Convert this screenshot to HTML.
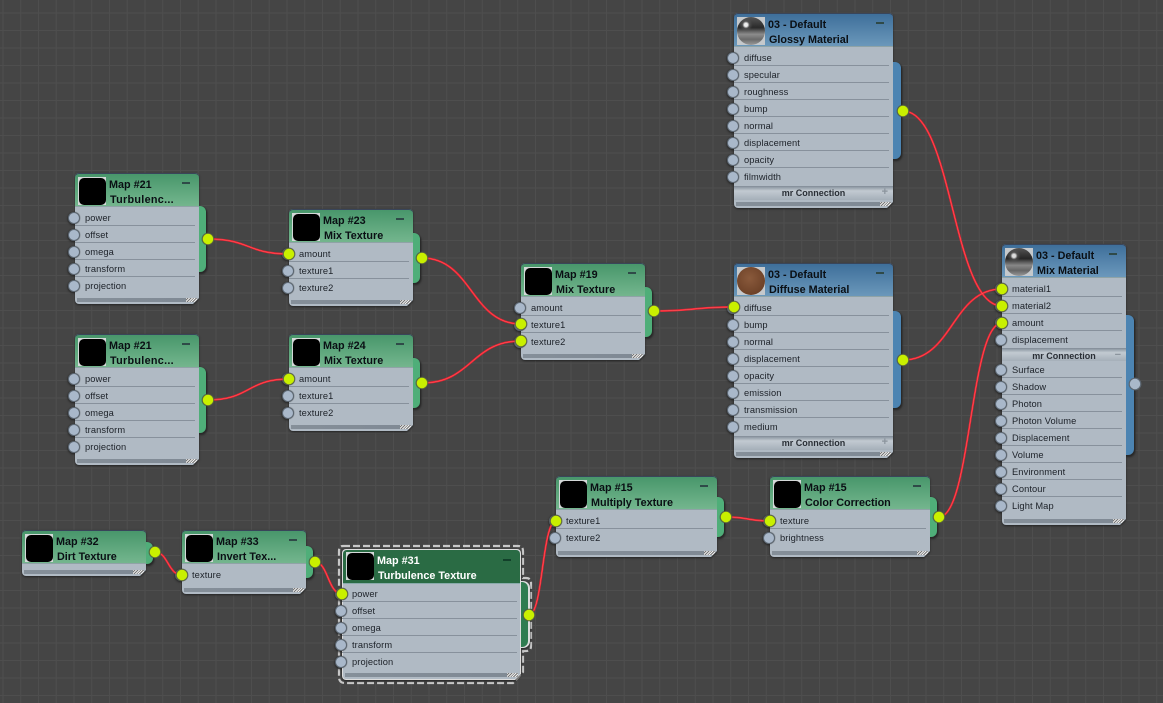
<!DOCTYPE html>
<html><head><meta charset="utf-8"><style>
html,body{margin:0;padding:0;width:1163px;height:703px;overflow:hidden;background:#454545}
#w{position:absolute;left:0;top:0;width:1163px;height:703px;overflow:hidden;font-family:"Liberation Sans",sans-serif;filter:blur(.3px);
background-color:#454545;background-image:linear-gradient(#4e4e4e 1px,transparent 1px),linear-gradient(90deg,#4e4e4e 1px,transparent 1px);background-size:17.75px 17.5px;background-position:2.5px 12.5px}
.n{position:absolute;filter:drop-shadow(0 1px 1px #222)}
.tab{position:absolute;width:7px;border-radius:0 6px 6px 0;box-shadow:1px 1px 1px #2a2a2a}
.g .tab{background:#4fae79}.bl .tab{background:#4c84b2;width:8px}
.b{position:absolute;left:0;top:-1px;right:0;bottom:0;background:#b0bac4;clip-path:polygon(0 0,100% 0,100% calc(100% - 6px),calc(100% - 6px) 100%,0 100%);border-radius:4px}
.h{position:relative;height:34px;box-sizing:border-box;border-radius:4px 4px 0 0;border-bottom:1px solid #8fa3a6;color:#0a0f14;font-size:10.8px;font-weight:bold;box-shadow:inset 0 1px 0 #39455a}
.g .h{background:linear-gradient(#47966a,#74b68e)}
.bl .h{background:linear-gradient(#3d6e9a,#6b98bb)}
.h span{position:absolute;left:34px;line-height:14px;top:5px;white-space:nowrap}
.h span+span{left:35px;top:20px}
.h u{position:absolute;right:9px;top:9px;width:8px;height:2px;background:#2f4a48}
.th{position:absolute;left:3px;top:3px;width:28px;height:28px;background:#d4d8d8}
.th:after{content:"";position:absolute;left:.5px;top:.5px;width:27px;height:27px;background:#000;border-radius:5px}
.thc{position:absolute;left:3px;top:3px;width:28px;height:28px;background:#c5c9cc;overflow:hidden}
.thc i{position:absolute;left:0;top:0;width:28px;height:28px;border-radius:50%}
.rows{position:absolute;left:0;right:0;top:35px}
p{position:relative;margin:0 4px 0 0;height:17px;line-height:18px;box-sizing:border-box;border-bottom:1px solid #87919c;padding-left:10px;font-size:9.3px;color:#1c2128;letter-spacing:.1px;white-space:nowrap}
p.l{border-bottom:0}
p:before{content:"";position:absolute;left:-7px;top:2.5px;width:10px;height:10px;border-radius:50%;background:#a9b8ca;border:1.5px solid #5d6873;box-shadow:0 0 1px #333}
.m{height:14px;margin:1px 0 0;background:linear-gradient(#8e99a4,#c2cad1 30%,#a5afb9);text-align:center;font-size:9px;font-weight:bold;line-height:13px;color:#2a2f36;position:relative;border-top:1px solid #87919c;box-sizing:border-box}
.m s{position:absolute;right:5px;top:-1px;color:#8b949d;text-decoration:none;font-size:11px}
.f{position:absolute;left:2px;right:2px;bottom:2px;height:4px;background:linear-gradient(90deg,#858f99,#7f8994);}
.f:after{content:"";position:absolute;right:0;top:0;width:11px;height:4px;background:repeating-linear-gradient(135deg,#eee 0 1px,#777 1px 2px)}
.sel .h{background:#2a6b44;color:#fff;border-bottom:1px solid #8aa;box-shadow:none}
.sel .h u{background:#12402a}
.sel .b{box-shadow:none;top:0}
svg{position:absolute;left:0;top:0}
</style></head><body><div id="w">

<svg width="1163" height="703" style="z-index:0">
<path d="M343 546H518Q523 546 523 551V578H526Q531 578 531 583V646Q531 651 526 651H523V672L513 683H345Q339 683 339 677V551Q339 546 343 546Z" fill="none" stroke="#c8c8c8" stroke-width="2.2" stroke-dasharray="7 3"/>
</svg>

<div class="n g" style="left:75px;top:174px;width:124px;height:130px"><div class="tab" style="left:124px;top:32px;height:66px"></div><div class="b"><div class="h"><span>Map #21</span><span style="letter-spacing:.3px">Turbulenc...</span><u></u></div><div class="f"></div></div><div class="th"></div><div class="rows"><p>power</p><p>offset</p><p>omega</p><p>transform</p><p class="l">projection</p></div></div>

<div class="n g" style="left:75px;top:335px;width:124px;height:130px"><div class="tab" style="left:124px;top:32px;height:66px"></div><div class="b"><div class="h"><span>Map #21</span><span style="letter-spacing:.3px">Turbulenc...</span><u></u></div><div class="f"></div></div><div class="th"></div><div class="rows"><p>power</p><p>offset</p><p>omega</p><p>transform</p><p class="l">projection</p></div></div>

<div class="n g" style="left:289px;top:210px;width:124px;height:96px"><div class="tab" style="left:124px;top:23px;height:50px"></div><div class="b"><div class="h"><span>Map #23</span><span>Mix Texture</span><u></u></div><div class="f"></div></div><div class="th"></div><div class="rows"><p>amount</p><p>texture1</p><p class="l">texture2</p></div></div>

<div class="n g" style="left:289px;top:335px;width:124px;height:96px"><div class="tab" style="left:124px;top:23px;height:50px"></div><div class="b"><div class="h"><span>Map #24</span><span>Mix Texture</span><u></u></div><div class="f"></div></div><div class="th"></div><div class="rows"><p>amount</p><p>texture1</p><p class="l">texture2</p></div></div>

<div class="n g" style="left:521px;top:264px;width:124px;height:96px"><div class="tab" style="left:124px;top:23px;height:50px"></div><div class="b"><div class="h"><span>Map #19</span><span>Mix Texture</span><u></u></div><div class="f"></div></div><div class="th"></div><div class="rows"><p>amount</p><p>texture1</p><p class="l">texture2</p></div></div>

<div class="n bl" style="left:734px;top:14px;width:159px;height:194px"><div class="tab" style="left:159px;top:48px;height:97px"></div><div class="b"><div class="h"><span>03 - Default</span><span>Glossy Material</span><u></u></div><div class="f"></div></div><div class="thc"><i style="background:radial-gradient(circle at 32% 28%,#eee 0 6%,rgba(90,90,90,.6) 13%,transparent 24%),linear-gradient(#555,#2a2a2a 38%,#5e5e5e 50%,#8c8c8c 62%,#6a6a6a 80%,#999)"></i></div><div class="rows"><p>diffuse</p><p>specular</p><p>roughness</p><p>bump</p><p>normal</p><p>displacement</p><p>opacity</p><p class="l">filmwidth</p><div class="m">mr Connection<s>+</s></div></div></div>

<div class="n bl" style="left:734px;top:264px;width:159px;height:194px"><div class="tab" style="left:159px;top:47px;height:97px"></div><div class="b"><div class="h"><span>03 - Default</span><span>Diffuse Material</span><u></u></div><div class="f"></div></div><div class="thc"><i style="background:radial-gradient(circle at 45% 40%,#8a5a3c,#6e4228 70%,#4a2c1c)"></i></div><div class="rows"><p>diffuse</p><p>bump</p><p>normal</p><p>displacement</p><p>opacity</p><p>emission</p><p>transmission</p><p class="l">medium</p><div class="m">mr Connection<s>+</s></div></div></div>

<div class="n bl" style="left:1002px;top:245px;width:124px;height:280px"><div class="tab" style="left:124px;top:70px;height:140px"></div><div class="b"><div class="h"><span>03 - Default</span><span>Mix Material</span><u></u></div><div class="f"></div></div><div class="thc"><i style="background:radial-gradient(circle at 32% 28%,#ddd 0 6%,rgba(90,90,90,.6) 13%,transparent 24%),linear-gradient(#555,#262626 38%,#5a5a5a 50%,#888 62%,#666 80%,#999)"></i></div><div class="rows"><p>material1</p><p>material2</p><p>amount</p><p class="l">displacement</p><div class="m" style="height:13px;margin-top:0;line-height:15px">mr Connection<s style="top:-1px">&#8722;</s></div><p>Surface</p><p>Shadow</p><p>Photon</p><p>Photon Volume</p><p>Displacement</p><p>Volume</p><p>Environment</p><p>Contour</p><p class="l">Light Map</p></div></div>

<div class="n g" style="left:556px;top:477px;width:161px;height:80px"><div class="tab" style="left:161px;top:20px;height:40px"></div><div class="b"><div class="h"><span>Map #15</span><span>Multiply Texture</span><u></u></div><div class="f"></div></div><div class="th"></div><div class="rows"><p>texture1</p><p class="l">texture2</p></div></div>

<div class="n g" style="left:770px;top:477px;width:160px;height:80px"><div class="tab" style="left:160px;top:20px;height:40px"></div><div class="b"><div class="h"><span>Map #15</span><span>Color Correction</span><u></u></div><div class="f"></div></div><div class="th"></div><div class="rows"><p>texture</p><p class="l">brightness</p></div></div>

<div class="n g" style="left:22px;top:531px;width:124px;height:45px"><div class="tab" style="left:124px;top:11px;height:22px"></div><div class="b"><div class="h"><span>Map #32</span><span>Dirt Texture</span></div><div class="f"></div></div><div class="th"></div></div>

<div class="n g" style="left:182px;top:531px;width:124px;height:63px"><div class="tab" style="left:124px;top:15px;height:32px"></div><div class="b"><div class="h"><span>Map #33</span><span>Invert Tex...</span><u></u></div><div class="f"></div></div><div class="th"></div><div class="rows"><p class="l">texture</p></div></div>

<div class="n g sel" style="left:342px;top:549px;width:179px;height:131px"><div class="tab" style="left:179px;top:33px;height:65px;background:#2f7c50;box-shadow:1px 0 0 1px #ddd"></div><div class="b" style="background:#ddd"><div style="position:absolute;left:1px;top:1px;right:1px;bottom:1px;background:#b0bac4;clip-path:polygon(0 0,100% 0,100% calc(100% - 5px),calc(100% - 5px) 100%,0 100%);border-radius:3px"><div class="h" style="height:34px"><span style="color:#fff;top:4px">Map #31</span><span style="color:#fff;top:19px">Turbulence Texture</span><u></u></div><div class="f"></div></div></div><div class="th" style="left:4px;top:3px"></div><div class="rows" style="top:36px"><p>power</p><p>offset</p><p>omega</p><p>transform</p><p class="l">projection</p></div></div>

<svg width="1163" height="703" style="z-index:5">
<g fill="none" stroke-linecap="round">
<g stroke="#f02030" stroke-width="2">
<path d="M208 239C250 239 247 254 289 254"/>
<path d="M208 400C250 400 247 379 289 379"/>
<path d="M422 258C472 258 471 324 521 324"/>
<path d="M422 383C472 383 471 341 521 341"/>
<path d="M654 311C694 311 694 307 734 307"/>
<path d="M903 111C953 111 952 306 1002 306"/>
<path d="M903 360C953 360 952 289 1002 289"/>
<path d="M939 517C971 517 970 323 1002 323"/>
<path d="M726 517C748 517 748 521 770 521"/>
<path d="M529 615C543 615 542 521 556 521"/>
<path d="M155 552C168 552 168 575 182 575"/>
<path d="M315 562C328 562 328 594 342 594"/>
</g>
<g stroke="#ff6a6a" stroke-width=".5">
<path d="M208 239C250 239 247 254 289 254"/>
<path d="M208 400C250 400 247 379 289 379"/>
<path d="M422 258C472 258 471 324 521 324"/>
<path d="M422 383C472 383 471 341 521 341"/>
<path d="M654 311C694 311 694 307 734 307"/>
<path d="M903 111C953 111 952 306 1002 306"/>
<path d="M903 360C953 360 952 289 1002 289"/>
<path d="M939 517C971 517 970 323 1002 323"/>
<path d="M726 517C748 517 748 521 770 521"/>
<path d="M529 615C543 615 542 521 556 521"/>
<path d="M155 552C168 552 168 575 182 575"/>
<path d="M315 562C328 562 328 594 342 594"/>
</g></g>
<g fill="#c9f000" stroke="#4c5244" stroke-width="1.2" stroke-opacity=".8">
<circle cx="208" cy="239" r="5.8"/><circle cx="289" cy="254" r="5.8"/>
<circle cx="208" cy="400" r="5.8"/><circle cx="289" cy="379" r="5.8"/>
<circle cx="422" cy="258" r="5.8"/><circle cx="422" cy="383" r="5.8"/>
<circle cx="521" cy="324" r="5.8"/><circle cx="521" cy="341" r="5.8"/>
<circle cx="654" cy="311" r="5.8"/><circle cx="734" cy="307" r="5.8"/>
<circle cx="903" cy="111" r="5.8"/><circle cx="903" cy="360" r="5.8"/>
<circle cx="1002" cy="289" r="5.8"/><circle cx="1002" cy="306" r="5.8"/><circle cx="1002" cy="323" r="5.8"/>
<circle cx="726" cy="517" r="5.8"/><circle cx="770" cy="521" r="5.8"/>
<circle cx="939" cy="517" r="5.8"/><circle cx="556" cy="521" r="5.8"/>
<circle cx="529" cy="615" r="5.8"/><circle cx="342" cy="594" r="5.8"/>
<circle cx="155" cy="552" r="5.8"/><circle cx="182" cy="575" r="5.8"/><circle cx="315" cy="562" r="5.8"/>
</g>
<circle cx="1135" cy="384" r="5.8" fill="#a9b8ca" stroke="#5d6873" stroke-width="1.2"/>
</svg>
</div></body></html>
